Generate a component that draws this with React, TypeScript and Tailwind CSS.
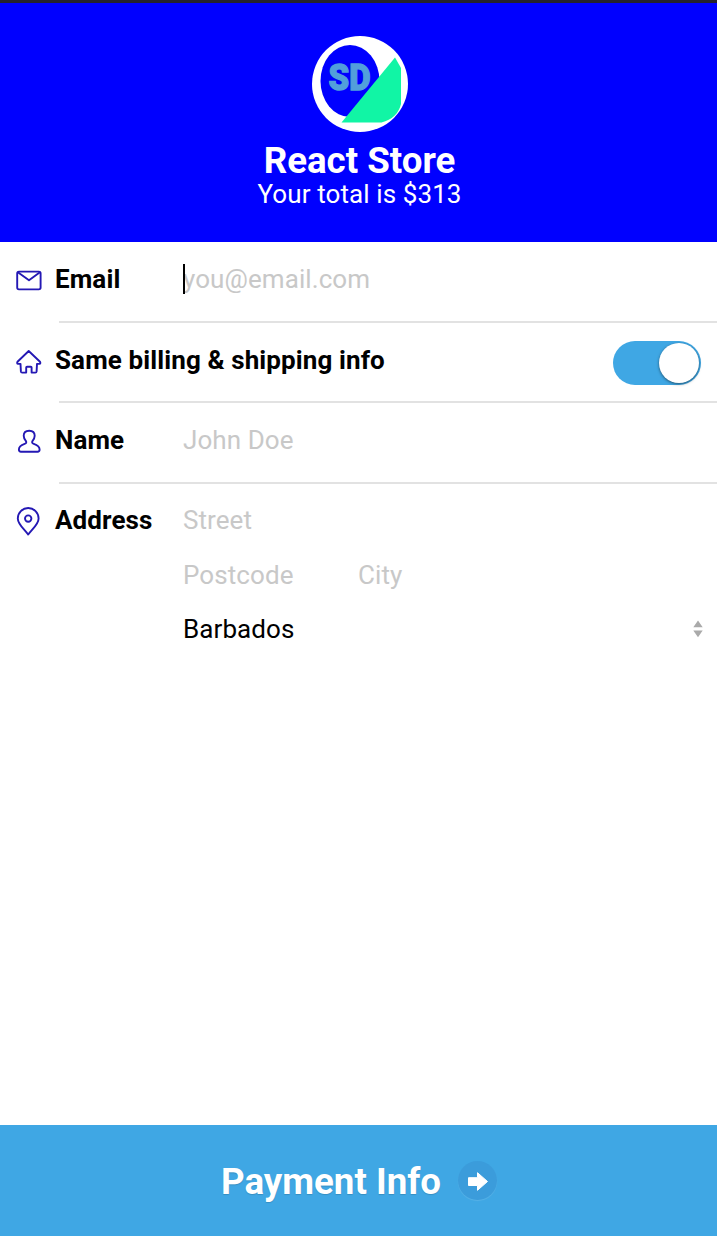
import type { ReactNode } from 'react';

const stroke = {
  fill: 'none',
  stroke: '#2418b4',
  strokeWidth: 1.9,
  strokeLinejoin: 'round' as const,
  strokeLinecap: 'round' as const,
};

function MailIcon() {
  return (
    <svg width="28" height="30" viewBox="0 0 28 30" {...stroke}>
      <rect x="2.2" y="6.6" width="23.4" height="17.8" rx="1.8" />
      <path d="M3.2 7.4 L14 15.2 L24.6 7.4" />
    </svg>
  );
}

function HomeIcon() {
  return (
    <svg width="28" height="30" viewBox="0 0 28 30" {...stroke}>
      <path d="M13.7 5 L25 15.7 Q26 17.5 24.3 17.9 L22 17.9 L21.6 25.4 Q21.5 26.6 20.3 26.6 H16.6 V21.6 Q16.6 20.8 15.8 20.8 H12 Q11.2 20.8 11.2 21.6 V26.6 H7.2 Q6 26.6 5.9 25.4 L5.5 17.9 L3.2 17.9 Q1.5 17.5 2.5 15.7 Z" />
    </svg>
  );
}

function UserIcon() {
  return (
    <svg width="28" height="30" viewBox="0 0 28 30" {...stroke}>
      <path d="M14.2 4.7 C10.8 4.7 8.7 6.8 8.7 9.8 C8.7 12.1 9.7 13.5 10.8 14.8 C11.7 16.4 11.4 17.3 9.6 17.9 C6.1 19 3.9 20.3 3.9 23.6 Q3.9 25.8 6 25.8 H22.6 Q24.6 25.8 24.6 23.6 C24.6 20.3 22.2 19 18.8 17.9 C17 17.3 16.7 16.4 17.6 14.8 C18.7 13.5 19.7 12.1 19.7 9.8 C19.7 6.8 17.6 4.7 14.2 4.7 Z" />
    </svg>
  );
}

function PinIcon() {
  return (
    <svg width="28" height="30" viewBox="0 0 28 30" {...stroke}>
      <path d="M13.2 28.6 C9.5 23 2.8 18.4 2.8 12.4 A10.4 10.4 0 0 1 23.6 12.4 C23.6 18.4 16.9 23 13.2 28.6 Z" />
      <circle cx="13.2" cy="12.6" r="3.2" />
    </svg>
  );
}

function Logo() {
  return (
    <svg width="96" height="96" viewBox="0 0 96 96">
      <circle cx="48" cy="48" r="48" fill="#fff" />
      <ellipse cx="38" cy="45" rx="29.5" ry="36" fill="#0000ff" />
      <text
        x="16.5"
        y="54.4"
        textLength="42"
        lengthAdjust="spacingAndGlyphs"
        fill="#529fdb"
        stroke="#529fdb"
        strokeWidth="1.4"
        fontFamily="Roboto, sans-serif"
        fontWeight="900"
        fontSize="37.5"
      >
        SD
      </text>
      <path d="M83 21.5 L89 32 V68 C87 77 80 84 69.5 86.5 H29.5 Z" fill="#11f5a5" />
    </svg>
  );
}

function Row({ icon, label, children }: { icon: ReactNode; label: string; children?: ReactNode }) {
  return (
    <section className="flex h-[80.5px] items-start pl-[15px] pt-[22px]">
      <span className="flex h-[32px] w-[40px] shrink-0 items-center">{icon}</span>
      <span className="w-[128px] shrink-0 whitespace-nowrap text-[26px] leading-[30px] font-bold tracking-[0.11px] text-black">
        {label}
      </span>
      {children}
    </section>
  );
}

function Divider() {
  return <div className="-mt-[2px] ml-[59px] h-[2px] bg-[#e2e2e2]" />;
}

const placeholder = 'text-[26px] leading-[30px] tracking-[0.08px] text-[#c8c8c8]';

export default function App() {
  return (
    <main className="flex h-[1236px] w-full flex-col overflow-hidden bg-white font-['Roboto',sans-serif]">
      <header className="flex h-[242px] shrink-0 flex-col items-center border-t-[3px] border-[#25222b] bg-[#0000ff] pt-[33px] pl-[2px] text-white">
        <Logo />
        <h1 className="mt-[9px] text-[36.7px] leading-[40px] font-bold">React Store</h1>
        <p className="-mt-[2px] text-[26px] leading-[30px] tracking-[0.1px]">Your total is $313</p>
      </header>

      <Row icon={<MailIcon />} label="Email">
        <span className={`relative ${placeholder}`}>
          you@email.com
          <span className="absolute top-0 left-0 h-[30px] w-[2px] bg-black" />
        </span>
      </Row>
      <Divider />
      <Row icon={<HomeIcon />} label="Same billing & shipping info">
        <span className="-mt-[4px] mr-[16px] ml-auto flex h-[44px] w-[88px] items-center justify-end rounded-full bg-[#3fa7e4] pr-[2px]">
          <span className="size-[40px] rounded-full bg-white shadow-[0_1px_3px_rgba(0,0,0,0.5)]" />
        </span>
      </Row>
      <Divider />
      <Row icon={<UserIcon />} label="Name">
        <span className={placeholder}>John Doe</span>
      </Row>
      <Divider />
      <div className="-mt-px">
        <Row icon={<PinIcon />} label="Address">
          <div className="flex flex-1 flex-col">
            <span className={placeholder}>Street</span>
            <div className="mt-[25px] flex">
              <span className={`w-[175px] ${placeholder}`}>Postcode</span>
              <span className={placeholder}>City</span>
            </div>
            <div className="mt-[24px] flex items-center justify-between pr-[14px] text-[26px] leading-[30px] tracking-[0.08px] text-black">
              <span>Barbados</span>
              <svg width="10" height="18" viewBox="0 0 10 18" fill="#aaa">
                <path d="M5 0.5 L9.7 7.3 H0.3 Z M5 17.2 L0.3 10.4 H9.7 Z" />
              </svg>
            </div>
          </div>
        </Row>
      </div>

      <button className="mt-auto flex h-[111px] w-full shrink-0 items-center justify-center gap-[17px] bg-[#3fa7e4] pl-px text-white">
        <span className="pt-[2px] text-[36.7px] leading-[42px] font-bold [text-shadow:0_1px_1px_rgba(0,0,0,0.15)]">Payment Info</span>
        <span className="flex size-[39px] items-center justify-center rounded-full bg-[#3b9cdb] shadow-[0_1px_1px_rgba(255,255,255,0.12)]">
          <svg width="22" height="20" viewBox="0 0 22 20" fill="#fff" stroke="#fff" strokeWidth="1" strokeLinejoin="round">
            <path d="M1.5 6.7 H10.5 V1.7 L20.5 10.5 L10.5 19.3 V14.5 H1.5 Z" />
          </svg>
        </span>
      </button>
    </main>
  );
}
